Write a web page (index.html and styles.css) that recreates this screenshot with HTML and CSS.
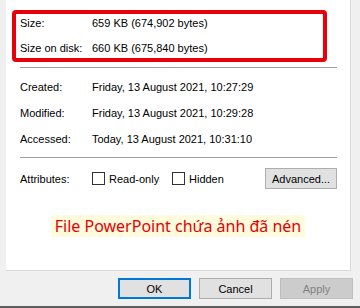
FILE: index.html
```html
<!DOCTYPE html>
<html lang="en">
<head>
    <meta charset="UTF-8">
    <meta name="viewport" content="width=device-width, initial-scale=1.0">
    <title>Properties</title>
    <link rel="stylesheet" href="styles.css">
</head>
<body>
    <div class="dialog">
        <div class="panel">
            <div class="size-box">
                <div class="row"><span class="label">Size:</span><span>659 KB (674,902 bytes)</span></div>
                <div class="row"><span class="label">Size on disk:</span><span>660 KB (675,840 bytes)</span></div>
            </div>
            <hr class="sep">

            <div class="dates">
                <div class="row"><span class="label">Created:</span><span>Friday, 13 August 2021, 10:27:29</span></div>
                <div class="row"><span class="label">Modified:</span><span>Friday, 13 August 2021, 10:29:28</span></div>
                <div class="row"><span class="label">Accessed:</span><span>Today, 13 August 2021, 10:31:10</span></div>
            </div>
            <hr class="sep">

            <div class="attrs">
                <span class="label">Attributes:</span>
                <label class="check"><span class="box"></span>Read-only</label>
                <label class="check hidden-check"><span class="box"></span>Hidden</label>
                <button class="btn advanced">Advanced...</button>
            </div>

            <div class="note"><span>File PowerPoint chứa ảnh đã nén</span></div>
        </div>

        <div class="buttons">
            <button class="btn ok">OK</button>
            <button class="btn">Cancel</button>
            <button class="btn disabled">Apply</button>
        </div>
    </div>
</body>
</html>
```

FILE: styles.css
```css
body {
    margin: 0;
    background-color: #f0f0f0;
    font-family: 'Liberation Sans', Arial, sans-serif;
    font-size: 11px;
    color: #000;
}

.dialog {
    width: 360px;
    height: 306px;
    border-bottom: 2px solid #5c5c5c;
    display: flex;
    flex-direction: column;
}

.panel {
    margin-left: 6px;
    width: 344px;
    height: 270px;
    background-color: #fff;
    border-right: 1px solid #d9d9d9;
    border-bottom: 1px solid #d9d9d9;
    display: flex;
    flex-direction: column;
}

.row {
    display: flex;
    line-height: 16px;
    white-space: nowrap;
}

.label {
    width: 72px;
    flex-shrink: 0;
}

/* red highlight round the size rows */
.size-box {
    margin: 10px 0 0 6px;
    width: 315px;
    height: 52px;
    padding: 1px 0 0 4px;
    box-sizing: border-box;
    border: 4px solid #e8000b;
    border-radius: 4px;
    display: flex;
    flex-direction: column;
    gap: 9px;
}

.sep {
    margin: 5px 0 0 14px;
    width: 317px;
    height: 0;
    border: 0;
    border-top: 1px solid #a0a0a0;
}

.dates {
    margin: 11px 0 10px 14px;
    display: flex;
    flex-direction: column;
    gap: 10px;
}

.dates + .sep {
    margin-top: 0;
}

.attrs {
    margin: 10px 0 0 14px;
    width: 317px;
    height: 21px;
    display: flex;
    align-items: center;
    white-space: nowrap;
}

.check {
    display: flex;
    align-items: center;
    gap: 4px;
    width: 80px;
}

.hidden-check {
    width: auto;
}

.box {
    width: 11px;
    height: 11px;
    border: 1px solid #333;
    background: #fff;
}

.btn {
    font-family: inherit;
    font-size: 11px;
    height: 21px;
    width: 73px;
    padding: 0;
    background-color: #e1e1e1;
    border: 1px solid #adadad;
    color: #000;
}

.advanced {
    margin-left: auto;
    width: 72px;
}

.note {
    margin-top: 27px;
    text-align: center;
    font-family: 'Noto Sans', sans-serif;
    font-size: 16px;
    line-height: 20px;
    color: #e60000;
}

.note span {
    background-color: #fffbdd;
    padding: 0 4px;
}

.buttons {
    margin-top: 7px;
    padding-left: 118px;
    display: flex;
    gap: 8px;
}

.ok {
    border: 2px solid #0078d7;
}

.disabled {
    background-color: #cccccc;
    border-color: #bfbfbf;
    color: #838383;
}
```
